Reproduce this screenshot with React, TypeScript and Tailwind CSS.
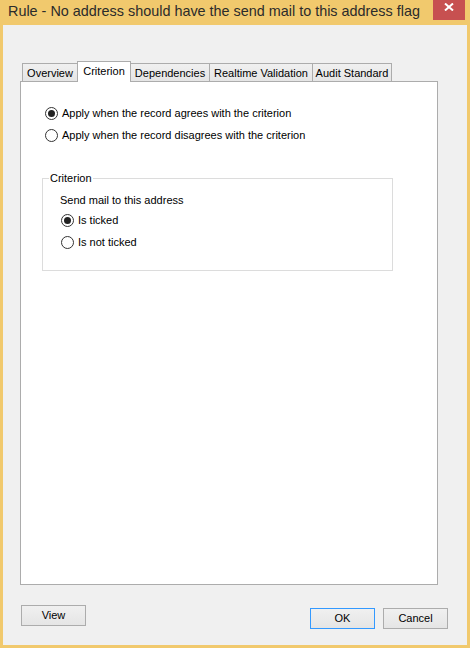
import React from 'react';

const font = { fontFamily: '"Liberation Sans", Arial, sans-serif' };

function Radio({ checked, label }: { checked?: boolean; label: string }) {
  return (
    <div className="flex h-[16px] items-center gap-[4px]">
      <span className="flex h-[13px] w-[13px] items-center justify-center rounded-full border border-[#333] bg-white">
        {checked && <span className="h-[7px] w-[7px] rounded-full bg-[#222]" />}
      </span>
      <span className="text-[11px] leading-none text-black">{label}</span>
    </div>
  );
}

function Tab({ label, w, active }: { label: string; w: string; active?: boolean }) {
  if (active) {
    return (
      <div className={`relative z-10 -mb-px -ml-px flex h-[21px] items-start justify-center border border-b-0 border-[#acacac] bg-white pt-[4px] text-[11px] leading-none ${w}`}>
        {label}
      </div>
    );
  }
  return (
    <div className={`-ml-px flex h-[18px] items-center justify-center border border-b-0 border-[#acacac] bg-gradient-to-b from-[#f0f0f0] to-[#e5e5e5] pt-px text-[11px] leading-none first:ml-0 ${w}`}>
      {label}
    </div>
  );
}

function Button({ label, primary }: { label: string; primary?: boolean }) {
  return (
    <button
      className={`flex h-[21px] w-[65px] items-center justify-center border bg-gradient-to-b from-[#f0f0f0] to-[#e5e5e5] text-[11px] leading-none text-black ${
        primary ? 'border-[#3399ff]' : 'border-[#acacac]'
      }`}
    >
      {label}
    </button>
  );
}

export default function App() {
  return (
    <div className="flex h-[648px] w-[470px] flex-col bg-[#f1c96d] text-black" style={font}>
      {/* Title bar */}
      <div className="flex h-[25px] items-start">
        <span className="whitespace-nowrap pl-[8px] pt-[1px] text-[14.4px] leading-[20px] text-[#2b2b2b]">
          Rule - No address should have the send mail to this address flag
        </span>
        <span className="ml-auto mr-[5px] flex h-[20px] w-[32px] shrink-0 items-start justify-center bg-[#c75050] pt-[3px]">
          <svg width="10" height="8" viewBox="0 0 10 8">
            <path d="M1 0.5 L9 7.5 M9 0.5 L1 7.5" stroke="white" strokeWidth="2" />
          </svg>
        </span>
      </div>

      {/* Client */}
      <div className="mx-[3px] mb-[3px] flex flex-1 flex-col bg-[#f0f0f0]">
        <div className="ml-[19px] mt-[36px] flex h-[20px] items-end">
          <Tab label="Overview" w="w-[56px]" />
          <Tab label="Criterion" w="w-[54px]" active />
          <Tab label="Dependencies" w="w-[80px]" />
          <Tab label="Realtime Validation" w="w-[104px]" />
          <Tab label="Audit Standard" w="w-[80px]" />
        </div>

        <div className="ml-[17px] h-[504px] w-[418px] border border-[#acacac] bg-white pl-[24px] pt-[23px]">
          <div className="flex flex-col gap-[6px]">
            <Radio checked label="Apply when the record agrees with the criterion" />
            <Radio label="Apply when the record disagrees with the criterion" />
          </div>

          <fieldset className="-ml-[3px] mt-[29px] h-[99px] w-[351px] border border-[#dcdcdc] pl-[6px]">
            <legend className="px-[1px] text-[11px] leading-[13px]">Criterion</legend>
            <div className="pl-[11px] pt-[7px]">
              <div className="flex h-[16px] items-center text-[11px] leading-none">Send mail to this address</div>
              <div className="ml-px mt-[4px]">
                <Radio checked label="Is ticked" />
              </div>
              <div className="ml-px mt-[6px]">
                <Radio label="Is not ticked" />
              </div>
            </div>
          </fieldset>
        </div>

        <div className="mt-[20px] flex items-start">
          <div className="ml-[18px]">
            <Button label="View" />
          </div>
          <div className="ml-auto mr-[19px] mt-[3px] flex gap-[8px]">
            <Button label="OK" primary />
            <Button label="Cancel" />
          </div>
        </div>
      </div>
    </div>
  );
}
